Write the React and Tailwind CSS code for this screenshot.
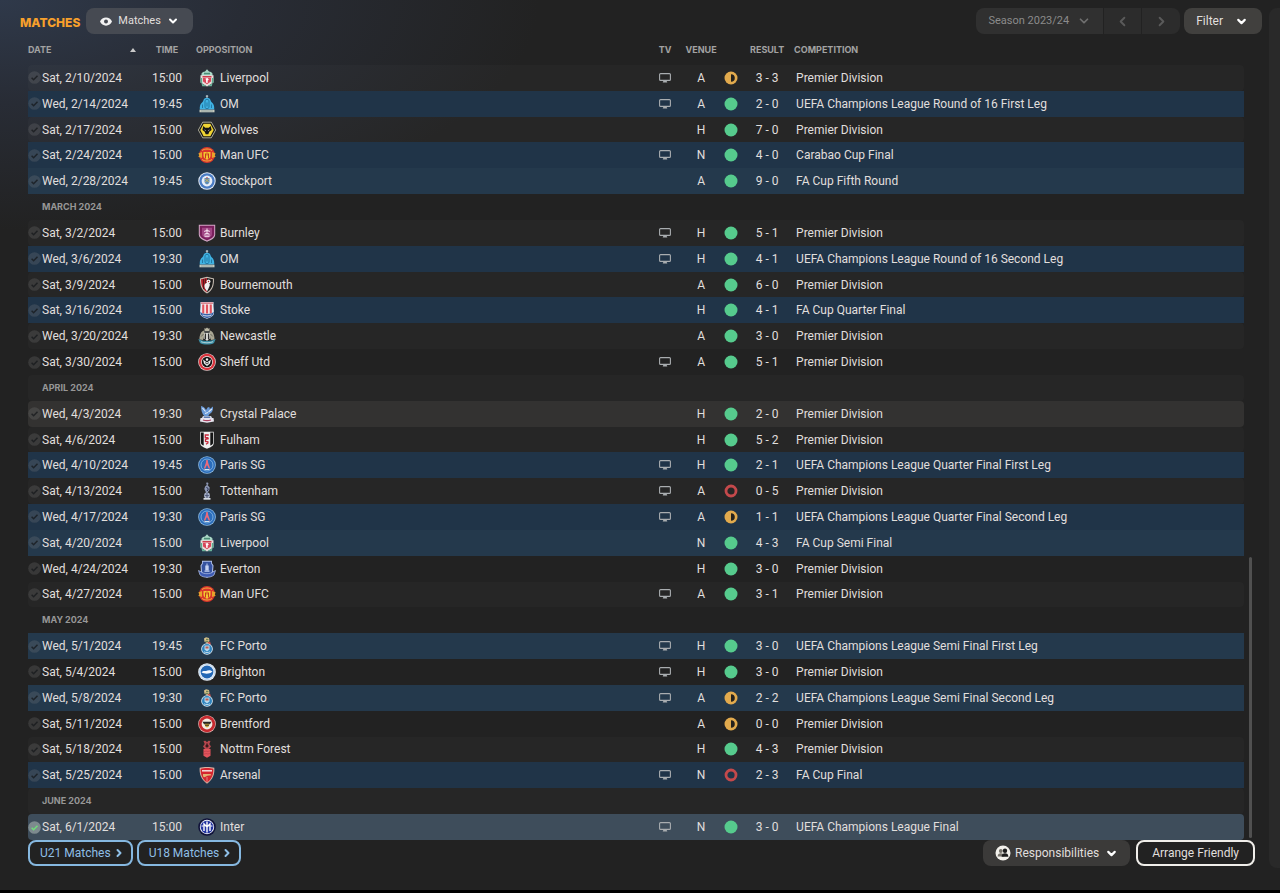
import clsx from "clsx";
import { FiChevronDown, FiChevronLeft, FiChevronRight } from "react-icons/fi";

// Club crests, all on an 18x18 grid
const CRESTS = {
  liverpool: (
    <>
      <path d="M3.500 4.500 5 3l2-.5L9 .3l2 2.200 2 .5 1.500 1.500v2.500h-11z" fill="#a9d8c6" />
      <path d="M6 3.800h6v1.600H6z" fill="#4d8f78" />
      <path d="M2.500 6.200h13v7.300L9 17.500l-6.500-4z" fill="#e9dedb" />
      <path d="M4.500 7h9v1.500h-9z" fill="#cf3b4b" />
      <path d="M5 9h8v3.500L9 15.300l-4-2.800z" fill="#d9475a" />
      <path d="m7.500 9.500 2-.5 1.300 1.500-1.300 1.300.4 2H8l.2-2z" fill="#fff" />
      <path d="M2.500 9h1.700v5.500l-1.700-1zM15.500 9h-1.700v5.500l1.700-1z" fill="#5fa98f" />
      <path d="M3.500 14.300 9 17.500l5.500-3.200-.7 2.900H4.200z" fill="#6bb59b" />
    </>
  ),
  om: (
    <>
      <path d="M9 0v3.500M7.800 1.200h2.400" stroke="#c3cdd0" strokeWidth="1" />
      <path d="M5.500 5c1-3 6-3 7 0 .2 1 .5 1.500 1.200 2.200 1.800 1.300 2.800 3.800 2.500 7.300H1.800c-.3-3.500.7-6 2.500-7.300.7-.7 1-1.200 1.200-2.200z" fill="#3fb2e3" />
      <path d="M7 5.500c1-1.500 3-1.500 4 0v7c-1 1.500-3 1.500-4 0zM4.500 9.500v3.500M13.500 9.500v3.500M9 7.500v4" stroke="#20749f" strokeWidth=".9" fill="none" />
      <path d="M1.500 14.700h15v2.600h-15z" fill="#c5c9bd" />
      <path d="M3 16h12" stroke="#7b9299" strokeWidth=".7" />
    </>
  ),
  wolves: (
    <>
      <path d="M4.700 1.200h8.600L17.600 9l-4.300 7.800H4.700L.4 9z" fill="#151515" stroke="#e9e6c8" strokeWidth=".7" />
      <path d="M5.600 2.800h6.800L15.700 9l-3.300 6.200H5.600L2.300 9z" fill="#f0d534" />
      <path d="M5.300 5 7.200 6.800h3.600L12.700 5l.9 4-2.300 1.700L10.300 13.300H7.700l-1-2.600L4.400 9z" fill="#161616" />
      <path d="m6.300 8.500 1.700.8-.8.500zM11.700 8.500 10 9.300l.8.500z" fill="#fff" />
    </>
  ),
  manutd: (
    <>
      <circle cx="9" cy="9" r="8" fill="#d9352d" />
      <path d="M.3 7.500 4 6v6L.3 10.800l1-1.600zM17.700 7.500 14 6v6l3.700-1.200-1-1.600z" fill="#e8a32a" />
      <path d="M4 4.500c3-2 7-2 10 0M4 13.500c3 2 7 2 10 0" stroke="#f3b53b" strokeWidth="1" fill="none" />
      <path d="M5.500 6h7v4c0 2-2 3-3.500 3.800C7.500 13 5.500 12 5.500 10z" fill="#f4c430" />
      <path d="M7.500 7.500v5M10.500 7.500v5M9 6.500v3" stroke="#c0281f" strokeWidth=".9" />
    </>
  ),
  stockport: (
    <>
      <circle cx="9" cy="9" r="8.700" fill="#e7eef8" />
      <circle cx="9" cy="9" r="7.700" fill="#4a7cc4" />
      <circle cx="9" cy="9" r="5.400" fill="#e7eef8" />
      <path d="M6.500 6h5v3.500c0 1.500-1.300 2.500-2.500 3-1.200-.5-2.500-1.500-2.500-3z" fill="#5c8bb8" />
      <path d="m7 7 4 3M11 7l-4 3" stroke="#c9b35f" strokeWidth=".9" />
      <path d="M9 5v1.500" stroke="#b94a48" strokeWidth="1.200" />
    </>
  ),
  burnley: (
    <>
      <path d="M.8.800h16.400v9.700c0 3.800-4.200 5.600-8.200 7.200-4-1.600-8.200-3.400-8.200-7.200z" fill="#d3a9c6" />
      <path d="M1.800 1.800h14.400v8.500c0 3-3.500 4.600-7.200 6.200-3.700-1.600-7.200-3.200-7.200-6.200z" fill="#7a1f5c" />
      <path d="M4 3.800h10v6.400c0 2.200-2.500 3.300-5 4.400-2.500-1.100-5-2.200-5-4.400z" fill="#a04584" />
      <path d="M9 4.500v6M6.200 7.500 9 6.300l2.800 1.200M6.500 10.500 9 9l2.500 1.500" stroke="#f3dcec" strokeWidth="1.100" fill="none" />
      <path d="M5.500 11.500h7l-1.500 1.500H7z" fill="#e7c3dc" />
    </>
  ),
  bournemouth: (
    <>
      <path d="M2 2.500 9 .8l7 1.700c0 7-1 11.500-7 15-6-3.500-7-8-7-15z" fill="#c9bfb5" />
      <path d="M3 3.300 9 1.900v14.400C4 13 3.200 9.500 3 3.300z" fill="#b3202a" />
      <path d="M9 1.900l6 1.400c-.2 6.200-1 9.700-6 13z" fill="#1b1b1b" />
      <path d="M5.500 3v10M7.400 2.500V14" stroke="#2b1517" strokeWidth=".7" />
      <circle cx="10.500" cy="5.500" r="2" fill="#f2f2f2" />
      <path d="M6.500 9c1-2.500 3.500-3 5-1.500 1 2-.5 3-1 5L9 15.500c-1-2-3-3.500-2.500-6.500z" fill="#eee" />
      <circle cx="10.500" cy="5.500" r=".7" fill="#b3202a" />
    </>
  ),
  stoke: (
    <>
      <path d="M2.500 1h13v4l.5 7c0 3-3.500 4.500-7 5.700C5.500 16.500 2 15 2 12l.5-7z" fill="#e9edf5" />
      <path d="M4 3.500h10v9H4z" fill="#f7dfe1" />
      <path d="M4.200 3.500h2v9h-2zM8 3.500h2v9H8zM11.800 3.500h2v9h-2z" fill="#e0545f" />
      <path d="M3 1.300h12V3H3z" fill="#d98792" />
      <path d="M2.300 10.500c.7 1.700 3.200 2.500 6.700 2.500s6-.8 6.700-2.500c.3 4-2.700 5.500-6.700 6.800-4-1.300-7-2.800-6.700-6.800z" fill="#3762a8" />
      <path d="M4.500 14c3 1.300 6 1.300 9 0" stroke="#e9edf5" strokeWidth=".9" fill="none" />
    </>
  ),
  newcastle: (
    <>
      <path d="M6.500 4.500V1l1.200.8L9 .6l1.300 1.200 1.200-.8v3.500z" fill="#b9b6a3" />
      <path d="M5.500 4h7l1 8h-9z" fill="#4a4c4b" />
      <path d="M1.500 12.500C1.500 8 3 4.500 5.800 3.500L7 7l-2 6zM16.500 12.500c0-4.500-1.500-8-4.300-9L11 7l2 6z" fill="#a9a693" />
      <path d="M3.200 9.500 5.500 7M14.800 9.500 12.500 7" stroke="#5b5a50" strokeWidth=".8" />
      <path d="M6.500 6h5v5.500L9 14l-2.500-2.500z" fill="#e4e4df" />
      <path d="M7.600 6.500v5.700M10.400 6.500v5.700" stroke="#1a1a1a" strokeWidth="1" />
      <path d="M.3 12c3 1 4.500 2 8.700 2s5.700-1 8.700-2l-1.700 4c-3 2-11 2-14 0z" fill="#3d8fa6" />
      <path d="M3 14.700c3 1.500 9 1.500 12 0" stroke="#cfe3e6" strokeWidth=".8" fill="none" />
    </>
  ),
  sheff: (
    <>
      <circle cx="9" cy="9" r="8.800" fill="#e9d9d9" />
      <circle cx="9" cy="9" r="8.200" fill="#d8343d" />
      <circle cx="9" cy="9" r="5.900" fill="#f0ecec" />
      <circle cx="9" cy="9" r="5.200" fill="#141414" />
      <path d="m5 6.500 4 3 4-3-1 4L9 13l-3-2.500z" fill="#ededed" />
      <path d="m7 9.500 2 1.500 2-1.500" stroke="#222" strokeWidth=".8" fill="none" />
      <circle cx="9" cy="6.500" r="1.200" fill="#f5f5f5" />
    </>
  ),
  palace: (
    <>
      <path d="M3 1c2 .3 4 1.800 5 4l2-3 2 .8-.6 1.500 3.600-2.800c.3 4.500-1.200 6.500-3.500 7.500L10 11.500H6.500C4 8.500 3 5 3 1z" fill="#6a9ad8" />
      <path d="m4.500 3 3 3.500M13.800 4l-3.300 3M7 8.500l3-1" stroke="#e3edf8" strokeWidth="1.100" />
      <path d="M5 11h8l1.500 2.500h-11z" fill="#c9cfdd" />
      <path d="M2.500 13h13l.5 3.500-7 1.300-7-1.300z" fill="#e7e4ee" />
      <path d="M5 15c2.500.9 5.500.9 8 0" stroke="#a9405e" strokeWidth="1.200" fill="none" />
      <path d="M6 12.200h6" stroke="#2f559c" strokeWidth="1" />
    </>
  ),
  fulham: (
    <>
      <path d="M2.300.8h13.400v11.400c0 3-3.500 4-6.700 5.500-3.200-1.500-6.700-2.500-6.700-5.500z" fill="#efefef" />
      <path d="M3 1.500h2.700v13C4.300 13.900 3 13.300 3 11.900zM12.300 1.500H15v10.400c0 1.400-1.300 2-2.700 2.600z" fill="#141414" />
      <path d="M10.800 4H7.300v2.700h3M10.800 7.500l-3.300.8v2.200l3 .3M10.500 11.500 8 13.200" stroke="#c7283a" strokeWidth="1.300" fill="none" />
    </>
  ),
  psg: (
    <>
      <circle cx="9" cy="9" r="8.800" fill="#8fbbe0" />
      <circle cx="9" cy="9" r="8" fill="#2a6cba" />
      <circle cx="9" cy="9" r="6" fill="none" stroke="#8dbce4" strokeWidth=".8" />
      <path d="M8.300 4h1.400l.5 3 2 5.500h-1.500L9.400 9.500h-.8L7.300 12.500H5.800L7.800 7z" fill="#e96a7a" />
      <path d="M6.500 13.500h5" stroke="#e9eef5" strokeWidth=".9" />
    </>
  ),
  tottenham: (
    <>
      <path d="M8 .8 10 .5l.5 1.500-1 1 2.200 2.500-.5 3-1.500 1.700v1.800H7.800v-2L6.300 7l.8-2.500L8.800 3z" fill="#8d97b3" />
      <path d="m8.500 5 1.800 2-1 2" stroke="#242c4d" strokeWidth="1" fill="none" />
      <circle cx="9" cy="13.600" r="3" fill="#a9b2c8" />
      <path d="M6.500 13c2 1 3.500 1 5 0M9 10.800v5.500" stroke="#394363" strokeWidth=".8" fill="none" />
      <path d="M5.500 16h7v1.700h-7z" fill="#d6dbe4" />
    </>
  ),
  everton: (
    <>
      <path d="M4 .8h10v2.500l1.500 2.200-.5 6.500c-1 3-3.500 4.500-6 5.700C6.500 16.500 4 15 3 12l-.5-6.500L4 3.300z" fill="#b5c3e8" />
      <path d="M4.800 1.700h8.400v2l1.300 2-.5 5.800c-.8 2.600-3 4-5 5-2-1-4.200-2.400-5-5l-.5-5.800 1.300-2z" fill="#35529f" />
      <path d="M7.300 5.500h3.400v4.700H7.300zM6.500 10.500h5v1.300h-5zM8.500 3.500h1v2h-1z" fill="#c5d2f2" />
      <path d="M.5 10.500 3 11.800c2.500 2.500 9.500 2.500 12 0l2.500-1.300-1.500 4.500c-3.500 3-10.500 3-14 0z" fill="#3d5ab2" stroke="#b5c3e8" strokeWidth=".7" />
    </>
  ),
  porto: (
    <>
      <path d="M6 1.500 8 .3l3 .8.500 3-2 2.200-3-1.500z" fill="#d9c28b" />
      <path d="M8 2.300h2.500M7.300 4.300h3" stroke="#58744c" strokeWidth="1" />
      <path d="M9.500 5.500 12 4.500l1 3-3 .5z" fill="#c64f4a" />
      <circle cx="9" cy="12" r="5.800" fill="#e0edf5" />
      <circle cx="9" cy="12" r="5" fill="#2f84bf" />
      <path d="M6.500 8.500h5v4L9 14.500l-2.500-2z" fill="#b5d8ec" />
      <path d="M7.500 9.500h3v2h-3z" fill="#bf5c52" />
      <path d="M6 14.800c2 1 4 1 6 0" stroke="#e0edf5" strokeWidth=".8" fill="none" />
    </>
  ),
  brighton: (
    <>
      <circle cx="9" cy="9" r="8.800" fill="#eef4fb" />
      <circle cx="9" cy="9" r="6.400" fill="#2267b5" />
      <path d="M3.500 9.300c1.500-2 3.500-1 4.500-1.300 2-1 4-1.500 6.500.5-1 .8-1.500 1.500-3 1.800-2.500.8-5.500.5-8-1z" fill="#f5f9fd" />
      <circle cx="9" cy="9" r="7.700" fill="none" stroke="#9ec1e2" strokeWidth=".6" />
    </>
  ),
  brentford: (
    <>
      <circle cx="9" cy="9" r="8.800" fill="#e9b9b7" />
      <circle cx="9" cy="9" r="8.200" fill="#c62a2f" />
      <circle cx="9" cy="9" r="5.400" fill="#f2ece4" />
      <path d="M4.500 6.800h9L12 9.300H6z" fill="#262626" />
      <path d="M6.500 8.800h5l-.8 2.600L9 12.600l-1.700-1.200z" fill="#c7a43a" />
      <path d="M7 10.200h4" stroke="#222" strokeWidth=".9" />
    </>
  ),
  forest: (
    <>
      <path d="M5.500 1 7.500.8 9 2.200 10.500.8l2 .2-1.200 3 1.700 2.500L11 9H7L5 6.500 6.700 4z" fill="#b8474e" />
      <path d="M9 3.500v4M7.500 6h3" stroke="#321518" strokeWidth="1.300" />
      <path d="M5.500 9h7v6.700L9 17.700l-3.500-2z" fill="#e3545c" />
      <path d="M5.500 11.300c1.200.8 2.300-.8 3.500 0s2.300-.8 3.500 0M5.500 13.800c1.200.8 2.300-.8 3.500 0s2.300-.8 3.500 0" stroke="#a63740" strokeWidth=".5" fill="none" />
    </>
  ),
  arsenal: (
    <>
      <path d="M1.700 1.800c4-1.200 10.600-1.200 14.600 0 .5 6-1.300 12-7.300 15.900C3 13.800 1.200 7.800 1.700 1.800z" fill="#d7b3a5" />
      <path d="M2.700 2.700c3.500-1 9.100-1 12.600 0 .3 5.300-1.300 10.300-6.300 13.800C4 13 2.400 8 2.700 2.700z" fill="#d5252f" />
      <path d="M4 4.800h10" stroke="#f7dede" strokeWidth="1.500" />
      <path d="M5 8h7.500l1 1.300-4 .5-3 1.500-1.500-.8z" fill="#e3b072" />
      <path d="M9 11v5" stroke="#e98a86" strokeWidth=".9" />
    </>
  ),
  inter: (
    <>
      <circle cx="9" cy="9" r="8.800" fill="#10123a" />
      <circle cx="9" cy="9" r="7.200" fill="#eff2fb" />
      <circle cx="9" cy="9" r="6.300" fill="#2233a0" />
      <path d="M6 13V6l3 3 3-3v7M9 3.500v11" stroke="#fff" strokeWidth="1.400" fill="none" />
      <path d="M3.500 8h2M12.500 8h2" stroke="#fff" strokeWidth="1" />
    </>
  ),
};

// [date, time, crest, opposition, tv, venue, outcome, result, competition, cup]
const PL = "Premier Division";
const UCL = "UEFA Champions League";
const ROWS = [
  ["Sat, 2/10/2024", "15:00", "liverpool", "Liverpool", 1, "A", "draw", "3 - 3", PL],
  ["Wed, 2/14/2024", "19:45", "om", "OM", 1, "A", "win", "2 - 0", `${UCL} Round of 16 First Leg`, 1],
  ["Sat, 2/17/2024", "15:00", "wolves", "Wolves", 0, "H", "win", "7 - 0", PL],
  ["Sat, 2/24/2024", "15:00", "manutd", "Man UFC", 1, "N", "win", "4 - 0", "Carabao Cup Final", 1],
  ["Wed, 2/28/2024", "19:45", "stockport", "Stockport", 0, "A", "win", "9 - 0", "FA Cup Fifth Round", 1],
  "MARCH 2024",
  ["Sat, 3/2/2024", "15:00", "burnley", "Burnley", 1, "H", "win", "5 - 1", PL],
  ["Wed, 3/6/2024", "19:30", "om", "OM", 1, "H", "win", "4 - 1", `${UCL} Round of 16 Second Leg`, 1],
  ["Sat, 3/9/2024", "15:00", "bournemouth", "Bournemouth", 0, "A", "win", "6 - 0", PL],
  ["Sat, 3/16/2024", "15:00", "stoke", "Stoke", 0, "H", "win", "4 - 1", "FA Cup Quarter Final", 1],
  ["Wed, 3/20/2024", "19:30", "newcastle", "Newcastle", 0, "A", "win", "3 - 0", PL],
  ["Sat, 3/30/2024", "15:00", "sheff", "Sheff Utd", 1, "A", "win", "5 - 1", PL],
  "APRIL 2024",
  ["Wed, 4/3/2024", "19:30", "palace", "Crystal Palace", 0, "H", "win", "2 - 0", PL],
  ["Sat, 4/6/2024", "15:00", "fulham", "Fulham", 0, "H", "win", "5 - 2", PL],
  ["Wed, 4/10/2024", "19:45", "psg", "Paris SG", 1, "H", "win", "2 - 1", `${UCL} Quarter Final First Leg`, 1],
  ["Sat, 4/13/2024", "15:00", "tottenham", "Tottenham", 1, "A", "loss", "0 - 5", PL],
  ["Wed, 4/17/2024", "19:30", "psg", "Paris SG", 1, "A", "draw", "1 - 1", `${UCL} Quarter Final Second Leg`, 1],
  ["Sat, 4/20/2024", "15:00", "liverpool", "Liverpool", 0, "N", "win", "4 - 3", "FA Cup Semi Final", 1],
  ["Wed, 4/24/2024", "19:30", "everton", "Everton", 0, "H", "win", "3 - 0", PL],
  ["Sat, 4/27/2024", "15:00", "manutd", "Man UFC", 1, "A", "win", "3 - 1", PL],
  "MAY 2024",
  ["Wed, 5/1/2024", "19:45", "porto", "FC Porto", 1, "H", "win", "3 - 0", `${UCL} Semi Final First Leg`, 1],
  ["Sat, 5/4/2024", "15:00", "brighton", "Brighton", 1, "H", "win", "3 - 0", PL],
  ["Wed, 5/8/2024", "19:30", "porto", "FC Porto", 1, "A", "draw", "2 - 2", `${UCL} Semi Final Second Leg`, 1],
  ["Sat, 5/11/2024", "15:00", "brentford", "Brentford", 0, "A", "draw", "0 - 0", PL],
  ["Sat, 5/18/2024", "15:00", "forest", "Nottm Forest", 0, "H", "win", "4 - 3", PL],
  ["Sat, 5/25/2024", "15:00", "arsenal", "Arsenal", 1, "N", "loss", "2 - 3", "FA Cup Final", 1],
  "JUNE 2024",
  ["Sat, 6/1/2024", "15:00", "inter", "Inter", 1, "N", "win", "3 - 0", `${UCL} Final`, 1],
];

const HOVERED = "Wed, 4/3/2024";
const SELECTED = "Sat, 6/1/2024";

const Crest = ({ club }) => (
  <svg width="18" height="18" viewBox="0 0 18 18" className="shrink-0" aria-hidden="true">
    {CRESTS[club]}
  </svg>
);

const Check = ({ active }) => (
  <svg width="13" height="13" viewBox="0 0 13 13" className="shrink-0" aria-hidden="true">
    <circle cx="6.500" cy="6.500" r="6.300" fill={active ? "#7d8a8e" : "#8a8a8a"} fillOpacity={active ? 1 : 0.22} />
    <path
      d="m3.600 6.800 2 2 3.900-4"
      fill="none"
      stroke={active ? "#6fdc7a" : "#15181b"}
      strokeOpacity={active ? 1 : 0.75}
      strokeWidth="1.500"
    />
  </svg>
);

const TvIcon = () => (
  <svg width="12" height="10" viewBox="0 0 12 10" role="img" aria-label="Televised" className="mx-auto">
    <rect x=".6" y=".6" width="10.800" height="6.800" rx="1" fill="none" stroke="#a9adb0" strokeWidth="1.100" />
    <path d="M4.500 7.500h3l.8 1.900H3.700z" fill="#a9adb0" />
  </svg>
);

const Outcome = ({ type }) => (
  <svg width="14" height="14" viewBox="0 0 14 14" role="img" aria-label={type} className="mx-auto">
    {type === "win" && <circle cx="7" cy="7" r="6.500" fill="#56cb8d" />}
    {type === "draw" && (
      <>
        <circle cx="7" cy="7" r="6.500" fill="#e2aa4d" />
        <path d="M7 3.200a3.800 3.800 0 0 1 0 7.600z" fill="#24211c" />
      </>
    )}
    {type === "loss" && <circle cx="7" cy="7" r="5" fill="none" stroke="#c4494b" strokeWidth="2.800" />}
  </svg>
);

const rowColor = (date, cup, even) => {
  if (date === SELECTED) return "bg-[#3e4d5b]";
  if (date === HOVERED) return "bg-[#333231]";
  if (cup) return even ? "bg-[#24394c]" : "bg-[#203448]";
  return even ? "bg-white/2" : "";
};

const MatchRow = ({ row, even }) => {
  const [date, time, club, opposition, tv, venue, outcome, result, competition, cup] = row;
  const rounded = !cup || date === SELECTED;

  return (
    <tr className={rowColor(date, cup, even)}>
      <td className={clsx(rounded && "rounded-l")}>
        <div className="flex items-center gap-px">
          <Check active={date === SELECTED} />
          {date}
        </div>
      </td>
      <td className="text-center">{time}</td>
      <td>
        <div className="flex items-center gap-1 pl-1.5">
          <Crest club={club} />
          {opposition}
        </div>
      </td>
      <td>{tv ? <TvIcon /> : null}</td>
      <td className="text-center">{venue}</td>
      <td><Outcome type={outcome} /></td>
      <td className="text-center">{result}</td>
      <td className={clsx("pl-0.5", rounded && "rounded-r")}>{competition}</td>
    </tr>
  );
};

const App = () => {
  return (
    <div className="h-screen min-h-[840px] flex flex-col bg-[#222222] font-['Roboto',sans-serif] text-xs text-[#e0dfdd] border-b-3 border-black overflow-hidden">
      <div className="flex-1 min-h-0 flex pt-2 bg-[radial-gradient(ellipse_540px_230px_at_0_0,#2f394a_0%,#282c35_45%,transparent_100%)]">
        <main className="flex-1 min-w-0 flex flex-col pl-5">
          {/* Header */}
          <header className="flex items-center justify-between pr-[7px]">
            <div className="flex items-center gap-1.5">
              <h1 className="font-['Inter',sans-serif] text-xs font-extrabold text-[#f7a02c] pt-1">MATCHES</h1>
              <button type="button" className="h-[26px] px-3.5 rounded-lg bg-[#464a52] flex items-center gap-1.5 text-[11px]">
                <svg width="12" height="9" viewBox="0 0 12 9" aria-hidden="true">
                  <path d="M0 4.500C2-1 10-1 12 4.500 10 10 2 10 0 4.500z" fill="#f2f2f2" />
                  <circle cx="6" cy="4.500" r="2" fill="#464a52" />
                </svg>
                Matches
                <FiChevronDown size={12} strokeWidth={4} className="text-white" />
              </button>
            </div>

            <div className="flex items-center gap-1">
              <div className="flex gap-px rounded-lg overflow-hidden text-[11px] text-[#8b8b8b]">
                <button type="button" className="h-[26px] px-3 bg-[#303030] flex items-center gap-2">
                  Season 2023/24
                  <FiChevronDown size={14} strokeWidth={3} className="text-[#6f6f6f]" />
                </button>
                <button type="button" aria-label="Previous season" className="w-[37px] bg-[#2c2c2c] flex items-center justify-center">
                  <FiChevronLeft size={15} strokeWidth={3} className="text-[#5a5a5a]" />
                </button>
                <button type="button" aria-label="Next season" className="w-[38px] bg-[#2c2c2c] flex items-center justify-center">
                  <FiChevronRight size={15} strokeWidth={3} className="text-[#5a5a5a]" />
                </button>
              </div>
              <button type="button" className="h-[26px] pl-3 pr-3.5 rounded-lg bg-[#41403e] flex items-center gap-3">
                Filter
                <FiChevronDown size={13} strokeWidth={4} className="text-white" />
              </button>
            </div>
          </header>

          {/* Fixtures */}
          <div className="flex-1 min-h-0 flex pl-2">
            <div className="flex-1 min-w-0">
              <table className="w-full h-full table-fixed border-separate border-spacing-0">
                <colgroup>
                  <col className="w-[114px]" />
                  <col className="w-[50px]" />
                  <col />
                  <col className="w-[30px]" />
                  <col className="w-[42px]" />
                  <col className="w-[18px]" />
                  <col className="w-[54px]" />
                  <col className="w-[37%]" />
                </colgroup>
                <thead className="font-['Inter',sans-serif] text-[9px] text-[#a2a2a2] text-left">
                  <tr className="h-[31px]">
                    <th scope="col">
                      <div className="flex items-center justify-between pr-1.5">
                        DATE
                        <svg width="6" height="4" viewBox="0 0 6 4" aria-hidden="true">
                          <path d="M0 4 3 0l3 4z" fill="#c9c9c9" />
                        </svg>
                      </div>
                    </th>
                    <th scope="col" className="text-center">TIME</th>
                    <th scope="col" className="pl-1">OPPOSITION</th>
                    <th scope="col" className="text-center">TV</th>
                    <th scope="col" className="text-center">VENUE</th>
                    <th scope="col" aria-label="Outcome"></th>
                    <th scope="col" className="text-center">RESULT</th>
                    <th scope="col">COMPETITION</th>
                  </tr>
                </thead>
                <tbody>
                  {ROWS.map((row, i) =>
                    typeof row === "string" ? (
                      <tr key={row} className={clsx(i % 2 === 0 && "bg-white/2")}>
                        <th
                          scope="rowgroup"
                          colSpan={8}
                          className="rounded pl-3.5 text-left font-['Inter',sans-serif] text-[9px] leading-[18px] font-bold text-[#979797]"
                        >
                          {row}
                        </th>
                      </tr>
                    ) : (
                      <MatchRow key={row[0]} row={row} even={i % 2 === 0} />
                    )
                  )}
                </tbody>
              </table>
            </div>
            <div className="w-[25px] flex flex-col justify-end pl-[5px] pb-0.5">
              <div className="w-[3px] h-[35%] rounded-full bg-[#505050]"></div>
            </div>
          </div>

          {/* Footer */}
          <footer className="h-[50px] shrink-0 flex items-start justify-between pl-2 pr-3.5">
            <div className="flex gap-1 text-[#8fbfe6]">
              {["U21 Matches", "U18 Matches"].map((label) => (
                <button key={label} type="button" className="h-[26px] pl-2.5 pr-1.5 rounded-lg border-2 border-[#86b8e0] flex items-center gap-0.5">
                  {label}
                  <FiChevronRight size={12} strokeWidth={4} />
                </button>
              ))}
            </div>
            <div className="flex gap-1.5">
              <button type="button" className="h-[26px] px-3 rounded-lg bg-[#3b3a39] flex items-center gap-1">
                <svg width="16" height="16" viewBox="0 0 16 16" aria-hidden="true">
                  <circle cx="8" cy="8" r="7.500" fill="#f3f1ec" />
                  <circle cx="5.800" cy="6" r="1.900" fill="#77736c" />
                  <path d="M2.600 11.500c0-2.200 1.400-3.200 3.200-3.200S9 9.300 9 11.500z" fill="#77736c" />
                  <circle cx="10" cy="5.800" r="2.200" fill="#1d1d1d" />
                  <path d="M6.600 11.800c0-2.500 1.500-3.600 3.400-3.600s3.400 1.100 3.400 3.600z" fill="#1d1d1d" />
                </svg>
                Responsibilities
                <FiChevronDown size={13} strokeWidth={4} className="ml-0.5 text-white" />
              </button>
              <button type="button" className="h-[26px] px-3.5 rounded-lg border-2 border-[#f0eeea]">
                Arrange Friendly
              </button>
            </div>
          </footer>
        </main>

        {/* Edge of the next panel */}
        <aside className="w-[11px] shrink-0 mb-[22px] rounded-l-lg bg-[#292929]"></aside>
      </div>
    </div>
  );
};

export default App;
